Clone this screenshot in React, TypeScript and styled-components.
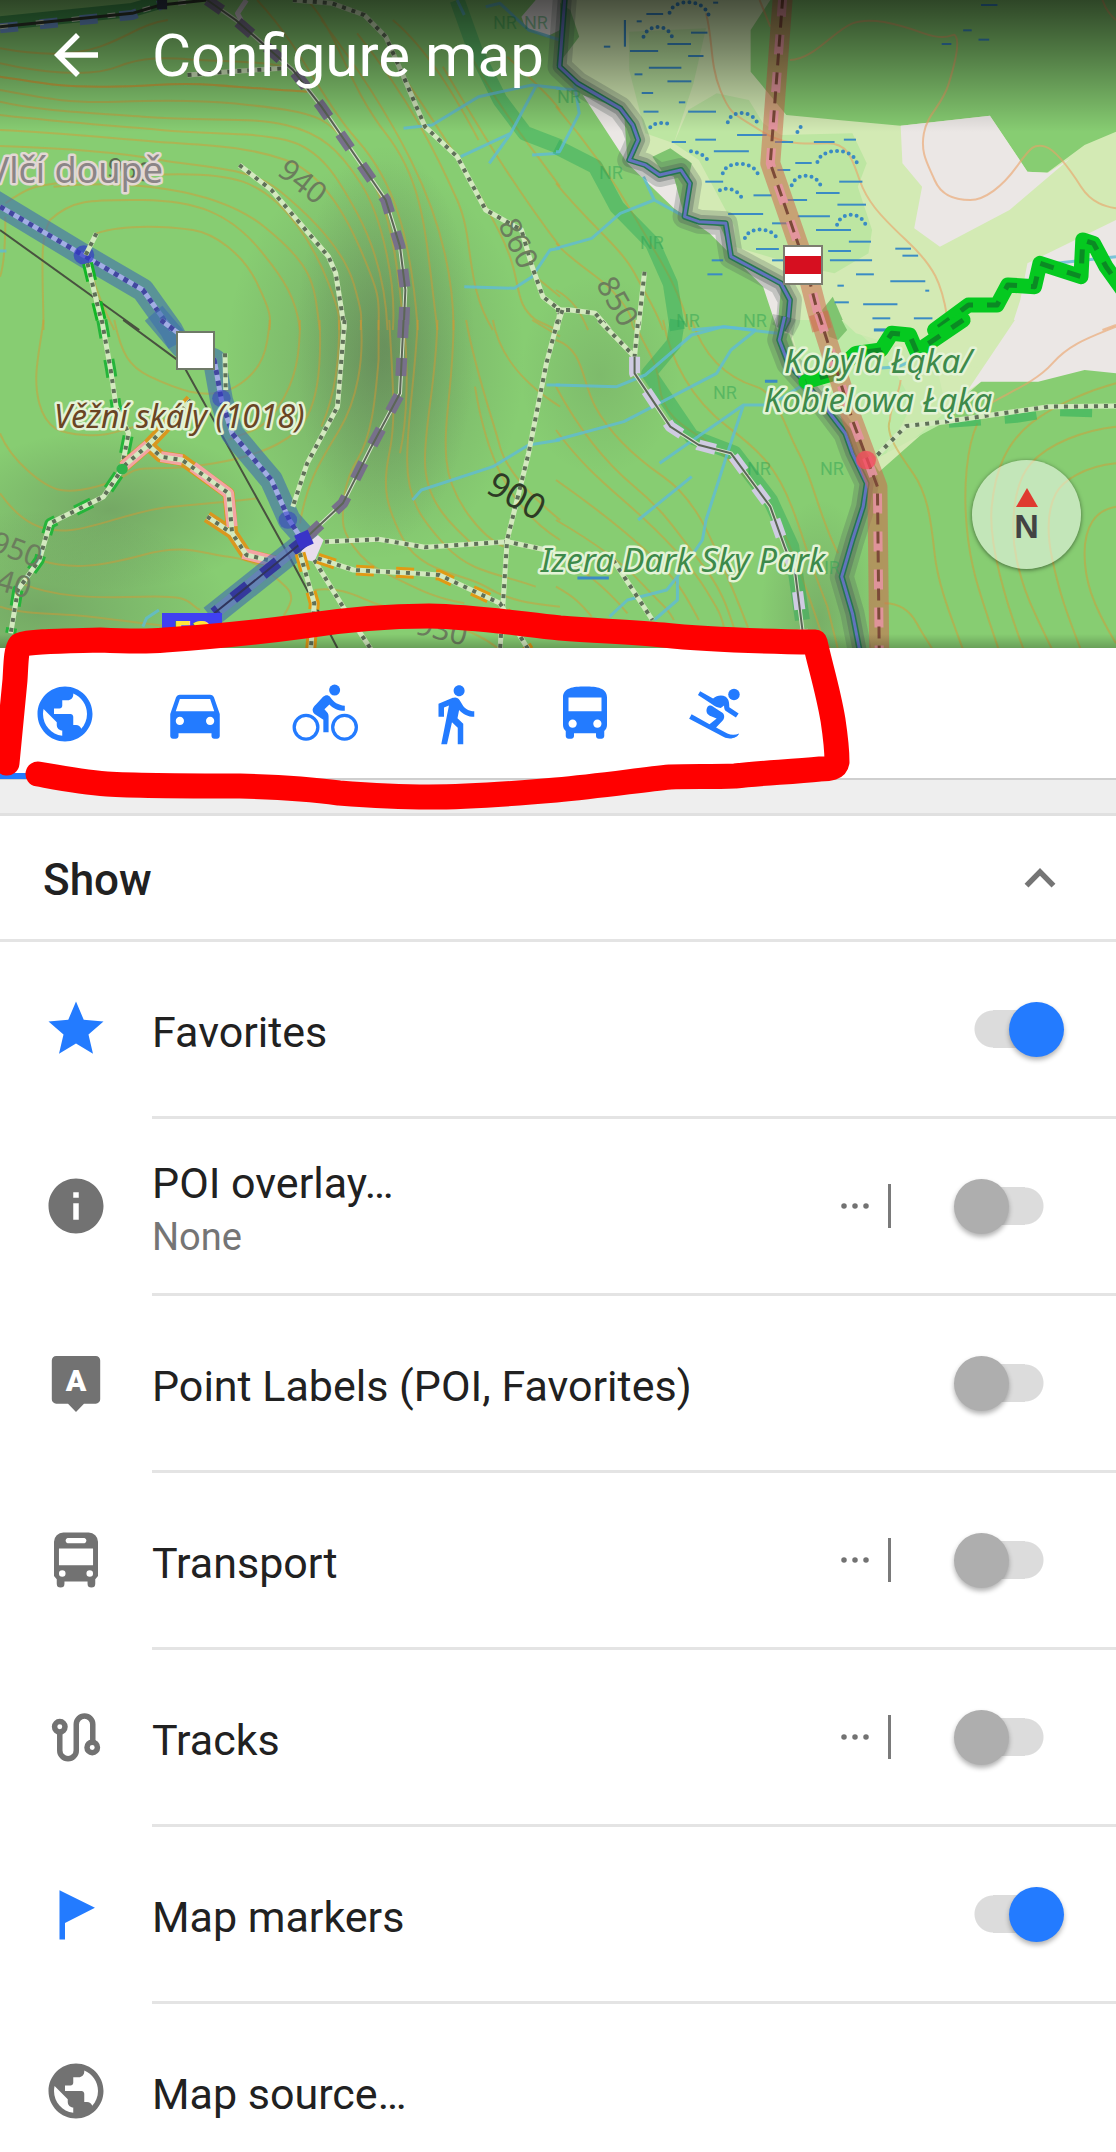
import React, { useState } from "react";
import styled, { createGlobalStyle } from "styled-components";
import {
  MdArrowBack,
  MdPublic,
  MdDirectionsCar,
  MdDirectionsWalk,
  MdDirectionsBus,
  MdStar,
  MdInfo,
} from "react-icons/md";

const blue = "#237bff";
const grey = "#727272";

const GlobalStyle = createGlobalStyle`
  * { box-sizing: border-box; }
  body {
    margin: 0;
    background: #ffffff;
    color: #212121;
    font-family: Roboto, "Noto Sans", sans-serif;
  }
  button {
    margin: 0;
    padding: 0;
    border: 0;
    background: none;
    color: inherit;
    font: inherit;
    cursor: pointer;
  }
`;

const Screen = styled.div`
  position: relative;
  display: flex;
  flex-direction: column;
  height: 100vh;
  overflow: hidden;
  background: #ffffff;
`;

const MapArea = styled.header`
  position: relative;
  flex: none;
  height: 648px;
  overflow: hidden;
  background: #87cd72;
`;

const MapCanvas = styled.svg`
  position: absolute;
  inset: 0;
  width: 100%;
  height: 100%;

  path,
  polyline {
    fill: none;
    vector-effect: non-scaling-stroke;
    stroke-linejoin: round;
  }
`;

const MapShade = styled.div`
  position: absolute;
  inset: 0;
  background:
    linear-gradient(to top, rgba(0, 0, 0, 0.22), rgba(0, 0, 0, 0) 14px),
    linear-gradient(to bottom, rgba(0, 0, 0, 0.66), rgba(0, 0, 0, 0.42) 50px, rgba(0, 0, 0, 0) 132px);
`;

const TitleBar = styled.div`
  position: relative;
  display: flex;
  align-items: center;
  gap: 43px;
  padding: 20px 43px;
  color: #ffffff;
`;

const BackButton = styled.button`
  display: flex;
  font-size: 66px;
`;

const Title = styled.h1`
  margin: 0;
  padding-top: 3px;
  font-size: 60px;
  line-height: 66px;
  font-weight: 400;
`;

const Compass = styled.button`
  position: absolute;
  right: 35px;
  bottom: 79px;
  display: flex;
  flex-direction: column;
  align-items: center;
  justify-content: center;
  gap: 4px;
  width: 109px;
  height: 109px;
  border-radius: 50%;
  background: rgba(255, 255, 255, 0.5);
  box-shadow: 0 1px 4px rgba(0, 0, 0, 0.5);
  color: #434343;
  font: 700 34px/30px "Liberation Sans", sans-serif;
`;

const CompassArrow = styled.span`
  border: 11px solid transparent;
  border-top-width: 0;
  border-bottom: 19px solid #df3a2f;
`;

const ProfileTabs = styled.nav`
  flex: none;
  display: flex;
  height: 132px;
  border-bottom: 2px solid #cfcfcf;
`;

const ProfileTab = styled.button<{ $active: boolean }>`
  display: flex;
  align-items: center;
  justify-content: center;
  width: 130px;
  height: 131px;
  border-top: 6px solid transparent;
  border-bottom: 6px solid ${(p) => (p.$active ? blue : "transparent")};
  color: ${blue};
  font-size: 66px;
`;

const Gap = styled.div`
  flex: none;
  height: 36px;
  background: #eeeeee;
  border-bottom: 3px solid #e0e0e0;
`;

const SectionHeader = styled.button`
  flex: none;
  display: flex;
  align-items: center;
  justify-content: space-between;
  height: 126px;
  padding: 0 43px;
  border-bottom: 3px solid #e4e4e4;
  text-align: left;
`;

const SectionTitle = styled.span`
  padding-top: 4px;
  font-size: 44px;
  line-height: 56px;
  font-weight: 500;
`;

const OptionList = styled.ul`
  flex: 1;
  min-height: 0;
  margin: 0;
  padding: 0;
  overflow: hidden;
  list-style: none;
`;

const Option = styled.li`
  display: flex;
  height: 177px;
`;

const OptionIcon = styled.span<{ $on: boolean }>`
  flex: none;
  display: flex;
  align-items: center;
  padding: 0 43px 3px;
  color: ${(p) => (p.$on ? blue : grey)};
  font-size: 66px;
`;

const OptionBody = styled.div`
  flex: 1;
  display: flex;
  align-items: center;
  padding-right: 52px;
  border-bottom: 3px solid #e4e4e4;
`;

const OptionText = styled.label`
  flex: 1;
  display: flex;
  flex-direction: column;
  padding-top: 5px;
`;

const OptionName = styled.span`
  font-size: 43px;
  line-height: 56px;
`;

const OptionDetail = styled.span`
  color: #757575;
  font-size: 38px;
  line-height: 52px;
`;

const MoreButton = styled.button`
  display: flex;
  color: ${grey};
  font-size: 66px;
`;

const Divider = styled.span`
  width: 3px;
  height: 44px;
  background: #7a7a7a;
`;

const Switch = styled.input`
  appearance: none;
  flex: none;
  display: flex;
  align-items: center;
  width: 110px;
  height: 55px;
  margin: 0 0 0 63px;
  background: linear-gradient(#dcdcdc, #dcdcdc) center / 32px 38px no-repeat,
    radial-gradient(circle at center, #dcdcdc 18px, transparent 19px) 20px center / 38px 38px no-repeat,
    radial-gradient(circle at center, #dcdcdc 18px, transparent 19px) 52px center / 38px 38px no-repeat;
  cursor: pointer;

  &::before {
    content: "";
    width: 55px;
    height: 55px;
    border-radius: 50%;
    background: #aeaeae;
    box-shadow: 0 3px 5px rgba(0, 0, 0, 0.3);
  }

  &:checked::before {
    margin-left: 55px;
    background: ${blue};
  }
`;

const Scribble = styled.svg`
  position: absolute;
  top: 590px;
  left: 0;
  width: 860px;
  height: 230px;
  pointer-events: none;
`;

const Icon = ({ children }: { children: React.ReactNode }) => (
  <svg viewBox="0 0 24 24" width="1em" height="1em" fill="currentColor" aria-hidden="true">
    {children}
  </svg>
);

const BikeIcon = () => (
  <Icon>
    <g fill="none" stroke="currentColor" strokeWidth="1.2">
      <circle cx="5.1" cy="16.8" r="4.3" />
      <circle cx="19.1" cy="16.8" r="4.3" />
    </g>
    <circle cx="15.5" cy="3.3" r="2" />
    <path d="M7.5 10.4C7.6 9.6 8.2 9 8.7 8.5L11.3 5.7C12.1 5 13.1 4.9 13.8 5.7C15.3 7.8 16.7 8.7 19.2 9V10.8C16.8 10.8 15 10 13.6 8.5L11.8 10.3L12.9 11.5C13.2 11.9 13.3 12.3 13.3 12.9V18.6H11.4V14.1L8.2 12C7.7 11.6 7.5 11 7.5 10.4Z" />
  </Icon>
);

const SkiIcon = () => (
  <Icon>
    <circle cx="18.9" cy="4.9" r="2.1" />
    <path d="M6.6 3.7L11.3 6.4C12.6 5.2 14.4 4.9 15.9 5.7C17 6.5 17.2 7.8 17.2 9.5L20.6 11.8L19.6 13.3L15.8 10.8C15.3 10.2 15.3 9.5 15.3 8.9L14.1 9.8C12.9 9.8 11.8 9.1 10.8 8.4L5.8 5.1Z" />
    <path d="M3.5 12.1L10 15.7L12.6 13.6L10.1 12.6C8.8 12 8.6 10.6 9.3 9.4C9.9 8.6 10.8 8.9 11.6 9.5L14.7 11.5C15.6 12.3 15.5 13.5 14.8 14.4L12.4 16.9L16.5 19.1C18 19.8 19.4 19.7 20.8 19.1C20.2 20.7 17.4 21.5 15.2 20.4L2.6 13.7Z" />
  </Icon>
);

const LabelIcon = () => (
  <Icon>
    <path d="M4.8 2.2H19.2A1.6 1.6 0 0 1 20.8 3.8V17.9A1.6 1.6 0 0 1 19.2 19.5H14.9L12 22.5L9.1 19.5H4.8A1.6 1.6 0 0 1 3.2 17.9V3.8A1.6 1.6 0 0 1 4.8 2.2Z" />
    <text x="12" y="14.9" fill="#ffffff" textAnchor="middle" fontFamily="Roboto" fontWeight="900" fontSize="11">
      A
    </text>
  </Icon>
);

const TransportIcon = () => (
  <Icon>
    <path
      fillRule="evenodd"
      d="M7.4 2H16.6A3.4 3.4 0 0 1 20 5.4V17.8L19 19V20.6A1.4 1.4 0 0 1 16.2 20.6V19.8H7.8V20.6A1.4 1.4 0 0 1 5 20.6V19L4 17.8V5.4A3.4 3.4 0 0 1 7.4 2ZM8.9 4A1 1 0 0 0 8.9 5.9H15.1A1 1 0 0 0 15.1 4ZM5.8 7.8V13.9H18.2V7.8ZM7 15.7A1.2 1.2 0 1 0 7 18.1A1.2 1.2 0 1 0 7 15.7ZM17 15.7A1.2 1.2 0 1 0 17 18.1A1.2 1.2 0 1 0 17 15.7Z"
    />
  </Icon>
);

const TracksIcon = () => (
  <Icon>
    <g fill="none" stroke="currentColor" strokeWidth="2">
      <circle cx="6.1" cy="8.3" r="1.9" />
      <circle cx="17.9" cy="15.8" r="1.9" />
      <path d="M6.1 10.4V16.9A3 3 0 0 0 12.1 16.9V7.4A3 3 0 0 1 18.1 7.4V13.8" />
    </g>
  </Icon>
);

const FlagIcon = () => (
  <Icon>
    <path d="M6 3.4L18.9 9.7L8 15.3V21.3H6Z" />
  </Icon>
);

const MoreIcon = () => (
  <Icon>
    <circle cx="8" cy="12" r="1" />
    <circle cx="12" cy="12" r="1" />
    <circle cx="16" cy="12" r="1" />
  </Icon>
);

const CollapseIcon = () => (
  <svg viewBox="0 0 24 24" width="66" height="66" fill="none" stroke="#757575" strokeWidth="2" aria-hidden="true">
    <path d="M7.1 14.8L12 9.8L16.9 14.8" />
  </svg>
);

/* ---- Map drawing: four overlapping quadrants ---- */

const tiles = { nw: [0, 0], ne: [556, 0], sw: [0, 320], se: [556, 320] } as const;

const Tile = ({ at, children }: { at: keyof typeof tiles; children: React.ReactNode }) => (
  <g transform={`translate(${tiles[at].join(" ")}) scale(0.357143 0.333333)`}>{children}</g>
);

type LineProps = { d: string };

const Contours = ({ d, light }: LineProps & { light?: boolean }) => (
  <path d={d} stroke={light ? "#eba268" : "#d9962f"} strokeOpacity={light ? 0.6 : 0.46} strokeWidth="2" />
);

const Track = ({ d }: LineProps) => (
  <>
    <path d={d} stroke="#d3e9bf" strokeWidth="5" />
    <path d={d} stroke="#5f7058" strokeWidth="4" strokeDasharray="4 6" />
  </>
);

const Stream = ({ d }: LineProps) => <path d={d} stroke="#5fbcd6" strokeWidth="3" strokeOpacity="0.8" />;

const Forestry = ({ d, color }: LineProps & { color: string }) => (
  <>
    <path d={d} stroke="#d5e2ca" strokeWidth="4" />
    <path d={d} stroke={color} strokeWidth="11" strokeDasharray="18 20" />
    <path d={d} stroke="#5b6656" strokeWidth="2" />
  </>
);

const MarkedTrail = ({ d, color }: LineProps & { color: string }) => (
  <>
    <path d={d} stroke={color} strokeWidth="11" strokeDasharray="18 22" />
    <Track d={d} />
  </>
);

const Reserve = ({ d }: LineProps) => <path d={d} stroke="#23a85a" strokeOpacity="0.42" strokeWidth="15" />;

const BlueRoute = ({ d }: LineProps) => <path d={d} stroke="#3f6fae" strokeOpacity="0.62" strokeWidth="23" />;

const BlueDots = ({ d }: LineProps) => (
  <>
    <path d={d} stroke="#a2ade4" strokeWidth="5" />
    <path d={d} stroke="#4247a0" strokeWidth="5" strokeDasharray="5 6" />
  </>
);

const River = ({ d }: LineProps) => (
  <>
    <path d={d} stroke="#4d5a58" strokeOpacity="0.25" strokeWidth="24" />
    <path d={d} stroke="#4d5a58" strokeOpacity="0.35" strokeWidth="14" />
    <path d={d} stroke="#25764f" strokeWidth="6" />
    <path d={d} stroke="#6273bd" strokeWidth="3" />
  </>
);

const Border = ({ d }: LineProps) => (
  <>
    <path d={d} stroke="#d0694f" strokeOpacity="0.55" strokeWidth="20" />
    <path d={d} stroke="#e893a4" strokeOpacity="0.85" strokeWidth="9" strokeDasharray="20 18" />
    <path d={d} stroke="#7c4a38" strokeWidth="3" strokeDasharray="12 7" />
  </>
);

const GreenRoute = ({ d }: LineProps) => (
  <>
    <path d={d} stroke="#05c920" strokeWidth="15" strokeLinecap="round" />
    <path d={d} stroke="#0b8a24" strokeWidth="5" strokeDasharray="14 14" />
  </>
);

const marshDashes = [
  [253, 300, 42], [378, 424, 98], [312, 378, 132], [207, 286, 153], [370, 413, 168], [260, 351, 203],
  [312, 379, 244], [220, 242, 223], [240, 272, 279], [344, 362, 307], [245, 287, 335], [370, 448, 335],
  [507, 590, 405], [390, 448, 419], [324, 364, 426], [442, 540, 454], [613, 664, 426], [722, 780, 426],
  [806, 840, 419], [670, 716, 489], [418, 468, 545], [620, 656, 510], [793, 858, 545], [553, 604, 586],
  [728, 794, 579], [648, 703, 600], [788, 868, 614], [482, 580, 642], [677, 767, 649], [605, 650, 670],
  [728, 826, 690], [820, 882, 725], [560, 624, 747], [762, 826, 753], [605, 640, 781], [767, 885, 781],
  [436, 468, 781], [424, 466, 823], [840, 890, 823], [950, 994, 746], [970, 1014, 767], [936, 1034, 844],
  [788, 806, 857], [780, 820, 907], [860, 956, 913], [886, 936, 955], [1002, 1054, 955], [1034, 1045, 872],
  [1190, 1236, 15], [1140, 1164, 91], [1183, 1213, 119], [1080, 1107, 132], [134, 152, 140], [440, 454, 8],
  [226, 240, 64], [892, 982, 989],
];

const marshTufts = [
  "M318 38C330 -4 410 -6 427 44", "M245 110C258 72 314 70 326 114", "M264 382C275 366 310 364 324 378",
  "M481 367C490 328 552 330 565 372", "M378 454C400 456 424 470 428 490", "M467 520C476 482 552 480 566 524",
  "M676 396C678 384 688 376 700 378", "M732 486C744 442 830 440 843 490", "M660 556C672 516 730 518 742 560",
  "M459 571C476 560 514 568 522 600", "M787 674C798 634 852 636 866 672", "M529 714C540 678 608 680 621 720",
];

const halo = { stroke: "#e4f3d6", strokeWidth: 5, paintOrder: "stroke", strokeLinejoin: "round" } as const;

const contourLabels: [string, number, number, number, number, string][] = [
  ["940", 303, 181, 38, 30, "#6b7d5d"], ["860", 519, 243, 64, 30, "#6b7d5d"], ["850", 618, 301, 60, 30, "#6b7d5d"],
  ["900", 516, 497, 30, 35, "#2d3a25"], ["950", 17, 549, 20, 30, "#6b7d5d"], ["940", 6, 581, 16, 30, "#6b7d5d"],
  ["930", 442, 629, 14, 30, "#6b7d5d"], ["960", 130, 168, 8, 26, "#5a6a4d"],
];

const reserveLabels = [
  [505, 23], [536, 23], [569, 97], [611, 173], [652, 243], [688, 321], [755, 321], [725, 393], [759, 469],
  [832, 469], [828, 568],
];

const MapDrawing = () => (
  <MapCanvas viewBox="0 0 1116 648" preserveAspectRatio="xMidYMid slice" aria-hidden="true">
    <defs>
      <radialGradient id="hill">
        <stop offset="0" stopColor="#4d5a48" stopOpacity="0.32" />
        <stop offset="1" stopColor="#4d5a48" stopOpacity="0" />
      </radialGradient>
    </defs>
    <rect width="1116" height="648" fill="#87cd72" />

    <Tile at="ne">
      <polygon fill="#d3eab4" points="0,0 600,0 545,90 545,215 645,345 790,360 965,377 1215,347 1320,515 1375,518 1480,435 1568,395 1568,1000 640,1000 655,900 630,850 490,770 475,670 360,650 375,520 310,520 205,480 225,400 180,325 60,250 0,200" />
      <polygon fill="#ebe7e5" points="965,377 1215,347 1320,515 1378,518 1440,475 1270,630 1075,740 1003,685 1025,560 970,490" />
      <polygon fill="#ebe7e5" points="1568,660 1320,790 1300,900 1270,1000 1568,1000" />
      <polygon fill="#ebe7e5" points="75,285 190,330 200,480 330,530 360,650 460,680 500,770 630,860 620,990 580,860 430,700 330,625 200,490" />
      <polygon fill="#bde6a2" points="205,95 420,85 385,250 330,430 250,400 205,210" />
      <polygon fill="#bde6a2" points="370,330 450,280 540,300 580,370 630,405 830,400 870,490 845,560 885,690 875,760 780,820 690,800 500,740 500,680 440,560 400,480 330,430" />
      <polygon fill="#7fc470" points="0,0 40,30 65,110 30,160 0,200" />
      <polygon fill="#7fc470" points="270,470 320,445 380,490 370,540 300,520" />
      <polygon fill="#7fc470" points="745,930 775,890 815,990 760,990" />
    </Tile>
    <Tile at="se">
      <polygon fill="#d3eab4" points="640,0 700,190 830,330 905,455 1190,185 1290,0" />
      <polygon fill="#bde9a6" points="650,0 700,190 830,330 890,420 1100,300 1060,110 840,40 800,0" />
      <polygon fill="#d3eab4" points="840,30 1000,90 1200,150 1190,185 900,450 1000,250 930,120" fillOpacity="0.6" />
      <polygon fill="#ebe7e5" points="1285,0 1150,215 1190,185 1350,185 1480,150 1568,160 1568,0" />
      <polygon fill="#7fc470" points="750,0 800,0 815,30 790,60 765,50" />
    </Tile>

    <ellipse cx="375" cy="360" rx="150" ry="200" fill="url(#hill)" />
    <ellipse cx="385" cy="345" rx="90" ry="200" fill="url(#hill)" />
    <ellipse cx="110" cy="510" rx="160" ry="80" fill="url(#hill)" />
    <ellipse cx="40" cy="610" rx="190" ry="100" fill="url(#hill)" />
    <ellipse cx="600" cy="375" rx="80" ry="100" fill="url(#hill)" opacity="0.5" />
    <ellipse cx="820" cy="620" rx="60" ry="120" fill="url(#hill)" opacity="0.8" />

    <Tile at="nw">
      <Contours d="M0 145C100 165 200 170 280 140S400 70 470 60M0 190C100 215 250 235 330 200S480 175 560 180S700 180 800 200M0 230C100 245 150 262 300 260S480 245 600 255S780 270 860 275" />
      <Contours d="M0 230C100 245 150 262 300 260S480 245 600 255S780 270 860 275M0 270C150 300 200 310 330 305S560 300 650 310S850 330 900 360S980 440 1040 540S1120 850 1130 990" />
      <Contours d="M0 305C100 330 200 335 400 350S700 350 800 375S950 450 1010 550S1110 850 1100 990M0 345C200 370 300 375 450 390S700 395 800 420S950 540 1000 640S1080 850 1085 990M0 390C200 400 350 420 500 430S720 450 800 480S950 600 1010 750S1060 900 1060 990" />
      <Contours d="M0 438C200 445 350 460 450 480S700 500 780 570S960 740 990 850S1010 950 1010 990M15 610C80 560 100 555 200 545S560 500 680 545S880 740 920 850S945 950 950 990M150 560C350 540 600 560 740 680S880 850 895 990" />
      <Contours d="M122 990C120 800 110 720 140 660C200 600 250 598 400 600S640 640 720 740S830 900 840 990M320 990C260 860 230 760 270 700C350 670 480 680 540 690S680 760 720 850S758 950 755 990M15 650C15 750 10 800 0 830" />
      <Contours d="M720 0C850 150 900 300 1000 420S1150 700 1170 990M860 0C950 100 970 250 1080 400S1190 700 1225 990M900 60C1000 200 1080 330 1150 480S1270 800 1270 990M1000 100C1150 300 1230 480 1280 600S1300 850 1380 990" />
      <Contours d="M1130 230C1250 420 1330 550 1400 700S1430 900 1500 960L1560 990M1240 200C1350 400 1440 560 1568 740M1320 170C1400 330 1480 430 1568 560M1100 60C1200 150 1280 300 1340 420M1420 170C1500 250 1540 290 1568 330M1500 830L1568 890" />
    </Tile>
    <Tile at="sw">
      <Contours d="M755 0C750 80 740 150 660 200S480 200 420 170S340 100 320 0M122 0C110 100 90 170 110 250S170 340 240 345S330 330 420 310M840 0C840 100 830 180 780 260S700 330 640 360M895 0C900 120 890 230 860 290S760 400 600 430S400 430 360 460S220 520 170 510S30 420 0 340M950 0C950 120 940 220 900 320" />
      <Contours d="M1010 0C1020 120 1000 240 950 330S860 480 840 610M1060 0V120C1050 250 1040 350 1000 420S960 560 960 600S1000 720 1080 760S1200 830 1300 850M1090 0C1100 200 1110 300 1090 400S1080 560 1130 660S1300 760 1360 800S1480 850 1568 860M1130 0C1145 150 1140 300 1120 400" />
      <Contours d="M1170 0C1160 200 1140 300 1140 420S1180 600 1250 680S1400 760 1500 800M1225 0C1220 200 1190 300 1190 420S1250 600 1330 680M1270 0C1270 200 1240 300 1250 420S1350 650 1410 680M1305 0C1330 150 1380 300 1400 380S1500 540 1568 600M1380 0C1400 120 1480 200 1568 260M1490 0L1568 50M1330 200C1360 400 1420 560 1568 660" />
      <Contours d="M0 520C60 610 120 640 200 630S380 570 480 560S700 540 720 535M110 720C200 750 280 740 400 705S560 700 640 710S760 760 800 800S790 880 780 920M60 790C150 830 250 835 400 830S520 850 560 870M0 860C60 880 120 880 200 885S380 910 480 920M880 810C960 800 1000 830 1050 850S1300 900 1400 990" />
    </Tile>
    <Tile at="ne">
      <Contours d="M0 320C80 420 150 520 220 650S340 850 375 990M0 550C100 680 180 740 220 820S280 930 300 990M0 730C60 800 130 830 180 900S200 960 220 990M0 870C50 900 70 940 90 990" />
      <Contours light d="M420 40C440 120 430 190 460 270S500 340 570 390S700 430 760 430S830 480 850 540S900 640 980 720S1080 850 1095 950M655 180C720 180 780 90 830 70S950 70 1030 100S1110 90 1120 110S1120 180 1100 250S1040 340 1030 400S1040 490 1060 540S1120 600 1160 600S1250 560 1290 500S1340 430 1370 440S1440 510 1470 560S1540 620 1568 625M570 0L600 80M1530 0C1540 30 1550 45 1568 60M1530 990L1568 975" />
    </Tile>
    <Tile at="se">
      <Contours d="M0 60C80 90 70 180 110 260S220 410 300 470S420 620 460 720S520 870 540 930M0 200C60 320 130 420 220 500S340 640 400 720S480 860 500 930M0 330C80 450 170 520 250 600S380 740 420 810S460 880 470 920M0 480C80 540 180 620 260 700S360 820 400 900M0 600C80 650 180 720 240 790S310 860 330 900M0 700C60 740 130 790 200 880M0 800C50 830 70 850 100 890" />
      <Contours d="M220 0C240 80 280 100 290 200S380 330 430 370S580 520 620 600S700 800 740 930L770 990M300 0C320 120 380 240 480 320S620 450 660 560S700 700 760 860L790 990M380 0C420 130 500 180 560 200S640 320 680 400S740 600 790 700" />
      <Contours d="M935 300C920 340 960 400 1000 460S1050 600 1060 700S1110 900 1140 990M1180 310C1150 380 1140 500 1150 620S1180 800 1240 990M1568 190C1500 210 1400 250 1330 310S1230 450 1220 560S1260 850 1310 990M1568 320C1480 330 1380 370 1330 430S1270 620 1290 720S1340 880 1390 990M1568 430C1480 440 1420 480 1400 520S1370 620 1390 720S1430 880 1470 990M1568 560C1510 570 1480 620 1480 700S1500 850 1568 970M920 850C960 850 990 870 1010 910S1040 960 1055 990" />
      <Contours light d="M1568 20C1500 50 1440 70 1390 130S1260 220 1200 260M935 300C935 260 960 230 965 180" />
    </Tile>

    <Tile at="nw">
      <Reserve d="M1280 0L1330 150L1400 300L1470 400L1568 440" />
      <polygon fill="#ebe7e5" points="1460,50 1500,0 1568,0 1568,90 1530,110 1470,80" />
      <path d="M0 70L370 30L450 5" stroke="#177a3a" strokeOpacity="0.6" strokeWidth="14" />
      <Stream d="M1130 385L1210 375L1340 290L1490 255L1568 265M1500 260L1430 400L1370 490M1290 470L1430 400M1360 20L1400 10L1480 90L1568 120M1300 860L1440 865L1490 830L1540 750L1568 745M1490 465L1568 460M1280 0L1300 45M0 753H18" />
    </Tile>
    <Tile at="ne">
      <Reserve d="M0 440L110 500L170 620L270 730L320 850L340 990" />
      <Stream d="M0 265L60 270M50 240L65 340L10 455L0 455M0 745L100 715L180 640L275 600L360 650M275 600L245 530M1400 790L1568 770M380 990L470 980L560 990" />
      <g stroke="#3a8bc4" strokeWidth="6">
        {marshDashes.map(([x1, x2, y]) => (
          <line key={`${x1}-${y}`} x1={x1} x2={x2} y1={y} y2={y} />
        ))}
        <line x1="193" x2="193" y1="60" y2="140" />
      </g>
      {marshTufts.map((d) => (
        <path key={d} d={d} stroke="#3a8bc4" strokeWidth="4" strokeLinecap="round" strokeDasharray="0 6" />
      ))}
    </Tile>
    <Tile at="sw">
      <Stream d="M1155 540L1180 510L1380 440L1480 375L1568 360M1530 195H1568M400 920L410 895L445 870" />
    </Tile>
    <Tile at="se">
      <Reserve d="M340 0L330 70L260 160L380 350L500 400L600 540L660 680L690 900" />
      <Stream d="M0 195L170 200L250 165L380 45L470 20L620 40M560 30L490 90L450 160L190 305L0 360M525 255L480 400L420 600L410 660L340 770L340 840L275 900M230 600L380 470M290 430L525 255L600 255L700 190M150 890L200 840L310 810L340 770M900 145L960 140L1040 100" />
      <path d="M890 30H985M585 184H620M60 774H148" stroke="#3a8bc4" strokeWidth="3" />
      <path d="M1100 310L1290 295L1400 275L1568 280" stroke="#2fb35a" strokeOpacity="0.6" strokeWidth="9" strokeDasharray="32 24" />
    </Tile>

    <Tile at="nw">
      <path d="M0 690L390 990" stroke="#48523f" strokeWidth="2" />
      <BlueRoute d="M-30 595L240 770L400 870L480 990L500 1030" />
      <BlueDots d="M0 620L240 770L400 870L480 990" />
      <circle cx="235" cy="765" r="29" fill="#3038c8" fillOpacity="0.65" />
      <path d="M0 85L370 45L450 15" stroke="#6f9bd6" strokeWidth="10" strokeDasharray="18 22" />
      <path d="M0 80L370 40L450 15L580 0" stroke="#dbe9cf" strokeWidth="5" strokeDasharray="8 28" />
      <path d="M0 80L370 40L450 15L580 0" stroke="#30382c" strokeWidth="3" />
      <rect x="440" y="0" width="28" height="28" fill="#30384a" />
      <Track d="M525 225L640 215L790 205" />
      <path d="M690 0L665 40L690 90" stroke="#d8d0d8" strokeWidth="5" />
      <Forestry color="#77708a" d="M580 0L660 60L820 210L900 320L1080 600L1120 740L1135 870L1130 990" />
      <Track d="M820 0L930 10L1020 45L1080 110L1130 230L1190 380L1280 470L1360 630L1460 690L1490 800L1520 890L1568 930L1560 990" />
      <Track d="M670 495L760 570L920 770L940 820L965 990" />
      <Track d="M270 700L240 765" />
      <MarkedTrail color="#11b625" d="M245 790L265 880L290 990" />
    </Tile>
    <Tile at="ne">
      <Track d="M0 930H40L110 940L150 990" />
      <Track d="M248 815L230 990" />
      <Track d="M18 930L0 990" />
      <River d="M25 -10L10 200L60 250L180 325L215 375L230 420L205 480L250 495L290 525L350 510L375 550L360 650L400 665L475 670L490 770L560 810L630 850L655 900L650 960L635 990" />
      <Border d="M635 -10L600 490L700 800L745 990" />
      <GreenRoute d="M1600 890L1540 800L1505 730L1475 720L1470 830L1355 790L1340 860L1265 855L1235 915L1155 915L1060 990" />
    </Tile>
    <Tile at="sw">
      <path d="M345 0L510 130L800 690L880 850L945 985" stroke="#48523f" strokeWidth="2" />
      <MarkedTrail color="#25b53a" d="M285 0L310 150L325 260L360 340L340 450L290 530L140 610L110 720L50 810L30 940" />
      <path d="M535 240L415 375L345 440M415 375L450 410L510 420L640 520L650 640L690 705L770 725M580 590L650 640" stroke="#d9971f" strokeWidth="12" />
      <path d="M415 375L345 440M450 410L510 420M540 440L640 520L650 620M680 700L770 725" stroke="#f4a3a3" strokeWidth="11" />
      <Track d="M535 240L415 375L345 440M415 375L450 410L510 420L640 520L650 640L690 705L770 725M580 590L650 640" />
      <circle cx="342" cy="447" r="16" fill="#2fb34a" />
      <BlueRoute d="M430 -20L510 80L600 120L620 240L650 340L760 480L810 600L860 660L590 890" />
      <BlueDots d="M450 0L600 120L620 240L650 340L760 480L810 600L840 650" />
      <Forestry color="#77708a" d="M1130 0L1120 220L1040 380L960 550L860 650" />
      <polygon fill="#e9ddec" points="890,645 906,660 880,725 835,715 850,680" />
      <Track d="M630 100L632 210" />
      <path d="M860 655L600 880" stroke="#6a78c8" strokeWidth="12" strokeOpacity="0.6" />
      <path d="M860 655L600 880" stroke="#34389c" strokeWidth="12" strokeDasharray="19 19" />
      <path d="M860 655L600 880" stroke="#30345c" strokeWidth="2" />
      <path d="M832 668L870 650" stroke="#3a34c8" strokeWidth="15" />
      <circle cx="620" cy="235" r="26" fill="#3038c8" fillOpacity="0.5" />
      <circle cx="806" cy="600" r="26" fill="#3038c8" fillOpacity="0.5" />
      <Track d="M965 0L945 260L860 430L820 560" />
      <Track d="M910 665L1060 658L1190 682L1420 665L1530 690" />
      <Track d="M1562 0L1530 130L1480 400L1420 660L1400 990" />
      <Track d="M880 720L960 860L1040 990" />
      <MarkedTrail color="#e09a14" d="M890 715L990 750L1160 760L1230 765L1340 820L1400 850L1480 990" />
      <MarkedTrail color="#e09a14" d="M840 700L880 850L870 990" />
    </Tile>
    <Tile at="se">
      <Track d="M120 0L220 110L230 0" />
      <Track d="M160 720L270 900" />
      <Forestry color="#cfcbe2" d="M220 110L220 160L320 320L400 375L490 400L600 560L640 680L670 760L690 930" />
      <River d="M640 -10L625 60L650 130L700 190L760 270L810 340L830 400L870 490L860 560L830 660L800 770L830 880L850 990" />
      <Track d="M900 405L980 318L1090 305L1380 260L1568 258" />
      <GreenRoute d="M1140 0L1010 95L990 45L940 40L910 90L840 100L780 160L700 185" />
      <Border d="M735 -20L830 300L900 500L905 990" />
      <circle cx="868" cy="420" r="28" fill="#f4485c" fillOpacity="0.75" />
    </Tile>

    <g fontFamily="Roboto, sans-serif" fontSize="18" fill="#2ba253" fillOpacity="0.5" textAnchor="middle">
      {reserveLabels.map(([x, y]) => (
        <text key={`${x}-${y}`} x={x} y={y + 6}>
          NR
        </text>
      ))}
    </g>
    <g fontFamily="Noto Sans, Open Sans, sans-serif" textAnchor="middle">
      {contourLabels.map(([label, x, y, angle, size, color]) => (
        <text key={`${label}-${y}`} x={x} y={y} dy="11" fontSize={size} fill={color} transform={`rotate(${angle} ${x} ${y})`}>
          {label}
        </text>
      ))}
    </g>
    <g fontFamily="Noto Sans, Open Sans, sans-serif" fontSize="33">
      <text x="163" y="183" textAnchor="end" fontSize="36" fill="#8b8587" {...halo} stroke="#e3d8d4">
        Vlčí doupě
      </text>
      <g fontStyle="italic">
        <text x="54" y="428" fontSize="32" fill="#6a4524" {...halo}>Věžní skály (1018)</text>
        <g fill="#3d8a4a">
          <text x="878" y="373" textAnchor="middle" {...halo}>Kobyla Łąka/</text>
          <text x="878" y="412" textAnchor="middle" {...halo}>Kobielowa Łąka</text>
          <text x="683" y="572" textAnchor="middle" {...halo}>Izera Dark Sky Park</text>
        </g>
      </g>
    </g>

    <rect x="177" y="332" width="37" height="37" fill="#ffffff" stroke="#6f7a68" strokeWidth="2" />
    <rect x="784" y="246" width="38" height="38" fill="#ffffff" stroke="#7d7d70" strokeWidth="2" />
    <rect x="785" y="256" width="36" height="18" fill="#d60f20" />
    <rect x="162" y="613" width="60" height="36" fill="#4040f2" />
    <text x="192" y="645" textAnchor="middle" fontFamily="Noto Sans, sans-serif" fontWeight="700" fontSize="34" fill="#ffe63a">
      E3
    </text>
  </MapCanvas>
);

const profiles = [
  { name: "Browse map", icon: <MdPublic /> },
  { name: "Driving", icon: <MdDirectionsCar /> },
  { name: "Cycling", icon: <BikeIcon /> },
  { name: "Walking", icon: <MdDirectionsWalk /> },
  { name: "Public transport", icon: <MdDirectionsBus /> },
  { name: "Skiing", icon: <SkiIcon /> },
];

type Item = { id: string; name: string; detail?: string; icon: React.ReactNode; more?: boolean; toggle: boolean };

const items: Item[] = [
  { id: "favorites", name: "Favorites", icon: <MdStar />, toggle: true },
  { id: "poi", name: "POI overlay…", detail: "None", icon: <MdInfo />, more: true, toggle: true },
  { id: "labels", name: "Point Labels (POI, Favorites)", icon: <LabelIcon />, toggle: true },
  { id: "transport", name: "Transport", icon: <TransportIcon />, more: true, toggle: true },
  { id: "tracks", name: "Tracks", icon: <TracksIcon />, more: true, toggle: true },
  { id: "markers", name: "Map markers", icon: <FlagIcon />, toggle: true },
  { id: "source", name: "Map source…", icon: <MdPublic />, toggle: false },
];

export default function App() {
  const [profile, setProfile] = useState(0);
  const [open, setOpen] = useState(true);
  const [shown, setShown] = useState<Record<string, boolean>>({ favorites: true, markers: true });

  return (
    <Screen>
      <GlobalStyle />
      <MapArea>
        <MapDrawing />
        <MapShade />
        <TitleBar>
          <BackButton aria-label="Back">
            <MdArrowBack />
          </BackButton>
          <Title>Configure map</Title>
        </TitleBar>
        <Compass aria-label="Compass, north">
          <CompassArrow />
          N
        </Compass>
      </MapArea>

      <ProfileTabs aria-label="Profiles">
        {profiles.map((p, i) => (
          <ProfileTab key={p.name} aria-label={p.name} $active={i === profile} onClick={() => setProfile(i)}>
            {p.icon}
          </ProfileTab>
        ))}
      </ProfileTabs>
      <Gap />

      <SectionHeader aria-expanded={open} onClick={() => setOpen(!open)}>
        <SectionTitle>Show</SectionTitle>
        <CollapseIcon />
      </SectionHeader>
      {open && (
        <OptionList>
          {items.map((item) => {
            const on = !!shown[item.id];
            return (
              <Option key={item.id}>
                <OptionIcon $on={on}>{item.icon}</OptionIcon>
                <OptionBody>
                  <OptionText htmlFor={item.toggle ? item.id : undefined}>
                    <OptionName>{item.name}</OptionName>
                    {item.detail && <OptionDetail>{item.detail}</OptionDetail>}
                  </OptionText>
                  {item.more && (
                    <>
                      <MoreButton aria-label={`${item.name} options`}>
                        <MoreIcon />
                      </MoreButton>
                      <Divider />
                    </>
                  )}
                  {item.toggle && (
                    <Switch
                      id={item.id}
                      type="checkbox"
                      role="switch"
                      checked={on}
                      onChange={() => setShown({ ...shown, [item.id]: !on })}
                    />
                  )}
                </OptionBody>
              </Option>
            );
          })}
        </OptionList>
      )}

      <Scribble viewBox="0 590 860 230" aria-hidden="true">
        <g fill="none" stroke="#ff0000" strokeWidth="25" strokeLinecap="round" strokeLinejoin="round">
          <path d="M7 763C9 740 12 710 15 680C16 664 16 650 20 645C30 641 60 641 100 640C120 641 145 642 165 640C220 636 260 632 304 626C350 619 390 616 429 616C480 617 520 624 560 628C600 631 630 632 663 635C700 639 740 641 815 642C820 665 828 690 833 720C836 740 837 755 837 762C836 768 830 769 820 769C790 772 760 773 735 776C710 777 690 776 670 777C640 780 600 786 556 790C510 794 470 797 429 797C395 797 365 795 339 793C310 789 280 787 240 786C180 786 140 786 107 784C80 782 55 777 38 774" />
        </g>
      </Scribble>
    </Screen>
  );
}
